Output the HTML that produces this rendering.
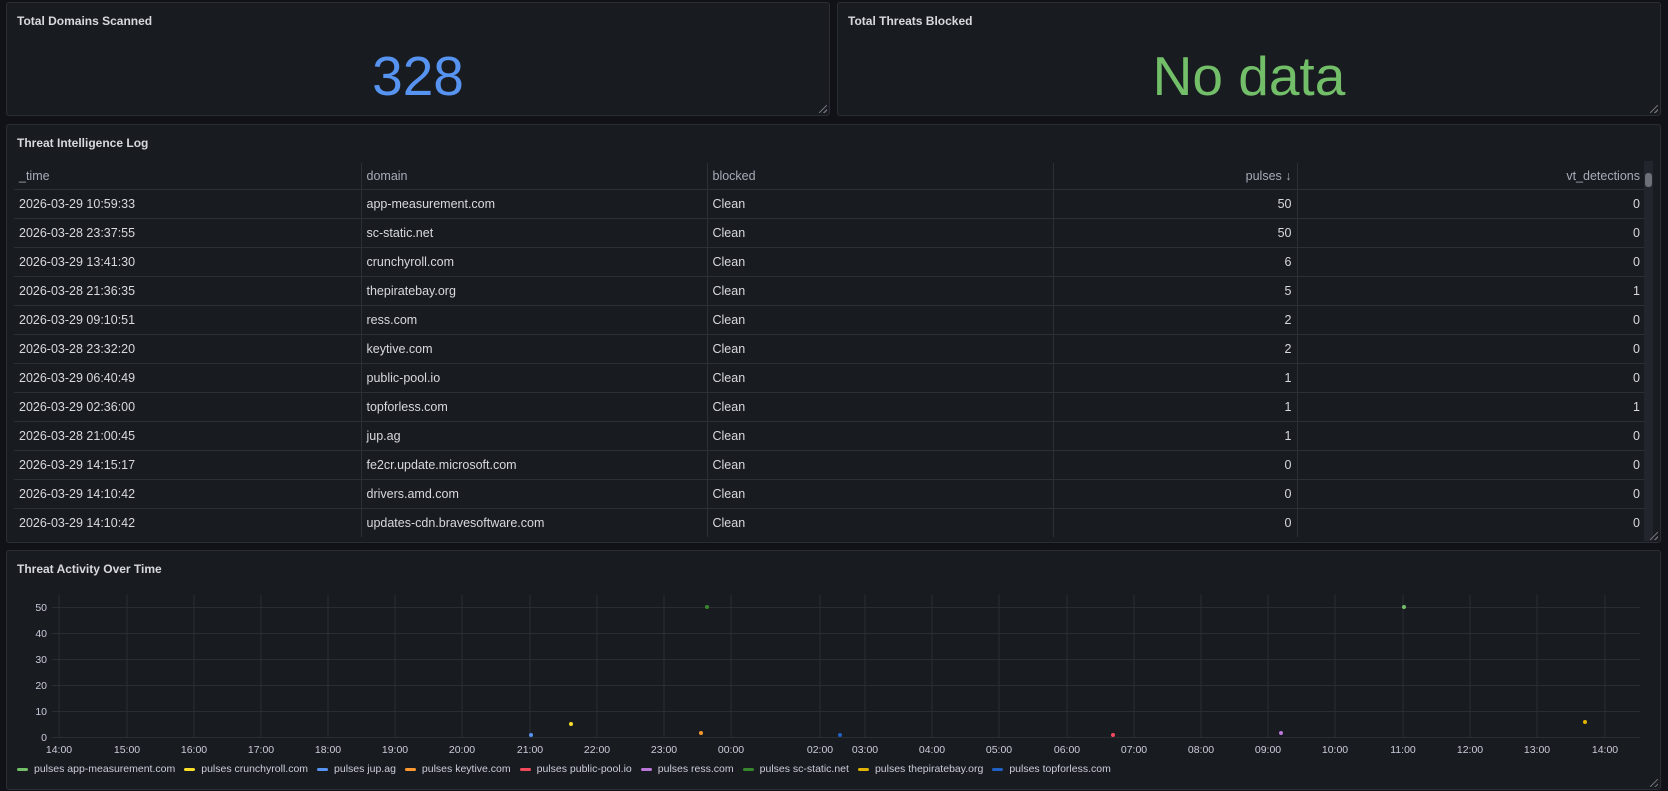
<!DOCTYPE html>
<html><head><meta charset="utf-8"><style>
*{box-sizing:border-box;margin:0;padding:0}
body{width:1668px;height:791px;background:#111217;font-family:"Liberation Sans",sans-serif;color:#ccccdc;position:relative;overflow:hidden}
.p{position:absolute;background:#181b1f;border:1px solid #2a2d35;border-radius:3px}
.t{position:absolute;left:10px;top:11px;font-size:12px;font-weight:bold;color:#d8d9e0}
.big{position:absolute;left:0;right:0;top:40px;text-align:center;font-size:55px;line-height:66px}
table{position:absolute;left:7px;top:38px;width:1631px;border-collapse:collapse;font-size:12.5px}
td,th{height:29px;padding:0 5px;border-bottom:1px solid #2c2f36;white-space:nowrap}
th{font-weight:normal;color:#a8abb8;text-align:left;height:26px;border-right:1px solid #2c2f36}
th:last-child{border-right:none}
td{border-right:1px solid #2c2f36;color:#d8d9e0}
td:last-child{border-right:none}
.r{text-align:right}
.sb{position:absolute;left:1637px;top:36px;width:9px;height:380px;background:#22252b}
.sb div{position:absolute;left:1px;top:12px;width:7px;height:14px;background:#6e7077;border-radius:3px}
.lg{position:absolute;left:10px;top:212px;display:flex;gap:9px;font-size:10.5px;color:#ccccdc}
.lg span{display:flex;align-items:center}
.lg i{display:inline-block;width:11px;height:3px;border-radius:2px;margin-right:6px}
.rz{position:absolute;right:2px;bottom:2px;width:8px;height:8px;background:linear-gradient(135deg,transparent 45%,#6e7077 45%,#6e7077 55%,transparent 55%,transparent 75%,#6e7077 75%,#6e7077 85%,transparent 85%)}
</style></head><body>
<div class="p" style="left:6px;top:2px;width:824px;height:114px"><div class="t">Total Domains Scanned</div><div class="big" style="color:#5794f2">328</div><div class="rz"></div></div>
<div class="p" style="left:837px;top:2px;width:824px;height:114px"><div class="t">Total Threats Blocked</div><div class="big" style="color:#73bf69">No data</div><div class="rz"></div></div>
<div class="p" style="left:6px;top:124px;width:1655px;height:419px"><div class="t">Threat Intelligence Log</div>
<table>
<colgroup><col style="width:347px"><col style="width:346px"><col style="width:346px"><col style="width:244px"><col></colgroup>
<tr><th>_time</th><th>domain</th><th>blocked</th><th class="r">pulses ↓</th><th class="r">vt_detections</th></tr>
<tr><td>2026-03-29 10:59:33</td><td>app-measurement.com</td><td>Clean</td><td class="r">50</td><td class="r">0</td></tr>
<tr><td>2026-03-28 23:37:55</td><td>sc-static.net</td><td>Clean</td><td class="r">50</td><td class="r">0</td></tr>
<tr><td>2026-03-29 13:41:30</td><td>crunchyroll.com</td><td>Clean</td><td class="r">6</td><td class="r">0</td></tr>
<tr><td>2026-03-28 21:36:35</td><td>thepiratebay.org</td><td>Clean</td><td class="r">5</td><td class="r">1</td></tr>
<tr><td>2026-03-29 09:10:51</td><td>ress.com</td><td>Clean</td><td class="r">2</td><td class="r">0</td></tr>
<tr><td>2026-03-28 23:32:20</td><td>keytive.com</td><td>Clean</td><td class="r">2</td><td class="r">0</td></tr>
<tr><td>2026-03-29 06:40:49</td><td>public-pool.io</td><td>Clean</td><td class="r">1</td><td class="r">0</td></tr>
<tr><td>2026-03-29 02:36:00</td><td>topforless.com</td><td>Clean</td><td class="r">1</td><td class="r">1</td></tr>
<tr><td>2026-03-28 21:00:45</td><td>jup.ag</td><td>Clean</td><td class="r">1</td><td class="r">0</td></tr>
<tr><td>2026-03-29 14:15:17</td><td>fe2cr.update.microsoft.com</td><td>Clean</td><td class="r">0</td><td class="r">0</td></tr>
<tr><td>2026-03-29 14:10:42</td><td>drivers.amd.com</td><td>Clean</td><td class="r">0</td><td class="r">0</td></tr>
<tr><td style="border-bottom:none">2026-03-29 14:10:42</td><td style="border-bottom:none">updates-cdn.bravesoftware.com</td><td style="border-bottom:none">Clean</td><td class="r" style="border-bottom:none">0</td><td class="r" style="border-bottom:none">0</td></tr>
</table>
<div class="sb"><div></div></div>
<div class="rz"></div>
</div>
<div class="p" style="left:6px;top:550px;width:1655px;height:240px"><div class="t">Threat Activity Over Time</div>
<svg width="1655" height="240" style="position:absolute;left:-7px;top:-551px;overflow:visible">
<g stroke="#2a2d33" stroke-width="1">
<line x1="52" x2="1640" y1="607.5" y2="607.5"/><line x1="52" x2="1640" y1="633.5" y2="633.5"/><line x1="52" x2="1640" y1="659.5" y2="659.5"/><line x1="52" x2="1640" y1="685.5" y2="685.5"/><line x1="52" x2="1640" y1="711.5" y2="711.5"/><line x1="52" x2="1640" y1="737.5" y2="737.5"/>
<line x1="59" x2="59" y1="595" y2="737"/><line x1="127" x2="127" y1="595" y2="737"/><line x1="194" x2="194" y1="595" y2="737"/><line x1="261" x2="261" y1="595" y2="737"/><line x1="328" x2="328" y1="595" y2="737"/><line x1="395" x2="395" y1="595" y2="737"/><line x1="462" x2="462" y1="595" y2="737"/><line x1="530" x2="530" y1="595" y2="737"/><line x1="597" x2="597" y1="595" y2="737"/><line x1="664" x2="664" y1="595" y2="737"/><line x1="731" x2="731" y1="595" y2="737"/><line x1="820" x2="820" y1="595" y2="737"/><line x1="865" x2="865" y1="595" y2="737"/><line x1="932" x2="932" y1="595" y2="737"/><line x1="999" x2="999" y1="595" y2="737"/><line x1="1067" x2="1067" y1="595" y2="737"/><line x1="1134" x2="1134" y1="595" y2="737"/><line x1="1201" x2="1201" y1="595" y2="737"/><line x1="1268" x2="1268" y1="595" y2="737"/><line x1="1335" x2="1335" y1="595" y2="737"/><line x1="1403" x2="1403" y1="595" y2="737"/><line x1="1470" x2="1470" y1="595" y2="737"/><line x1="1537" x2="1537" y1="595" y2="737"/><line x1="1605" x2="1605" y1="595" y2="737"/>
</g>
<g font-family="Liberation Sans" font-size="10.5" fill="#ccccdc" text-anchor="end">
<text x="47" y="611">50</text><text x="47" y="637">40</text><text x="47" y="663">30</text><text x="47" y="689">20</text><text x="47" y="715">10</text><text x="47" y="741">0</text></g>
<g font-family="Liberation Sans" font-size="10.5" fill="#ccccdc" text-anchor="middle">
<text x="59" y="753">14:00</text><text x="127" y="753">15:00</text><text x="194" y="753">16:00</text><text x="261" y="753">17:00</text><text x="328" y="753">18:00</text><text x="395" y="753">19:00</text><text x="462" y="753">20:00</text><text x="530" y="753">21:00</text><text x="597" y="753">22:00</text><text x="664" y="753">23:00</text><text x="731" y="753">00:00</text><text x="820" y="753">02:00</text><text x="865" y="753">03:00</text><text x="932" y="753">04:00</text><text x="999" y="753">05:00</text><text x="1067" y="753">06:00</text><text x="1134" y="753">07:00</text><text x="1201" y="753">08:00</text><text x="1268" y="753">09:00</text><text x="1335" y="753">10:00</text><text x="1403" y="753">11:00</text><text x="1470" y="753">12:00</text><text x="1537" y="753">13:00</text><text x="1605" y="753">14:00</text></g>
<circle cx="531" cy="735" r="2" fill="#5794f2"/><circle cx="571" cy="724" r="2" fill="#fade2a"/><circle cx="701" cy="733" r="2" fill="#ff9830"/><circle cx="707" cy="607" r="2" fill="#37872d"/><circle cx="840" cy="735" r="2" fill="#1f60c4"/><circle cx="1113" cy="735" r="2" fill="#f2495c"/><circle cx="1281" cy="733" r="2" fill="#b877d9"/><circle cx="1404" cy="607" r="2" fill="#73bf69"/><circle cx="1585" cy="722" r="2" fill="#e0b400"/>
</svg>
<div class="lg">
<span><i style="background:#73bf69"></i>pulses app-measurement.com</span>
<span><i style="background:#fade2a"></i>pulses crunchyroll.com</span>
<span><i style="background:#5794f2"></i>pulses jup.ag</span>
<span><i style="background:#ff9830"></i>pulses keytive.com</span>
<span><i style="background:#f2495c"></i>pulses public-pool.io</span>
<span><i style="background:#b877d9"></i>pulses ress.com</span>
<span><i style="background:#37872d"></i>pulses sc-static.net</span>
<span><i style="background:#e0b400"></i>pulses thepiratebay.org</span>
<span><i style="background:#1f60c4"></i>pulses topforless.com</span>
</div>
<div class="rz"></div>
</div>
</body></html>
